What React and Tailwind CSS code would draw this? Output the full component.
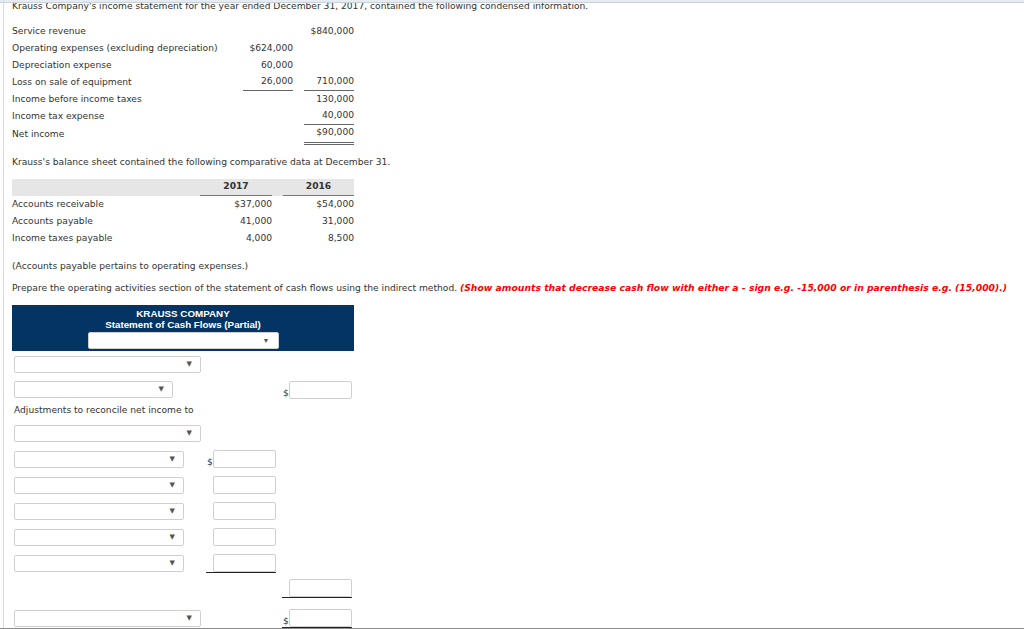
import React from "react";

const F = { fontFamily: '"DejaVu Sans", Verdana, sans-serif' };

function Sel({ w }) {
  return (
    <div
      className="h-[17px] bg-white border border-[#cfcfcf] rounded-[2px] flex items-center justify-end pr-[8px] shrink-0"
      style={{ width: w }}
    >
      <span className="text-[7px] text-[#555] leading-none">▼</span>
    </div>
  );
}

function Inp({ className = "" }) {
  return <div className={"h-[18px] bg-white border border-[#cfcfcf] rounded-[2px] flex-1 " + className} />;
}

function DollarInput({ dollar, underline }) {
  return (
    <div
      className={
        "w-[70px] flex items-end shrink-0 " +
        (underline ? "border-b border-[#222] pb-0" : "")
      }
    >
      <span className="w-[7px] text-[9.1px] leading-[12px] text-[#333] pl-[1px]">{dollar ? "$" : ""}</span>
      <Inp />
    </div>
  );
}

function IRow({ label, a, b, aLine, bLine, bDouble, extra = "" }) {
  return (
    <div className={"flex h-[17px] items-center " + extra}>
      <div className="w-[231px]">{label}</div>
      <div className={"w-[50px] h-full flex items-center justify-end " + (aLine ? "border-b border-[#666]" : "")}>{a}</div>
      <div className="w-[11px]" />
      <div
        className={
          "w-[50px] h-full flex items-center justify-end " +
          (bLine ? "border-b border-[#666] " : "") +
          (bDouble ? "border-b-[3px] border-double border-[#666] box-content" : "")
        }
      >
        {b}
      </div>
    </div>
  );
}

function BRow({ label, a, b }) {
  return (
    <div className="flex h-[17px] items-center">
      <div className="w-[188px]">{label}</div>
      <div className="w-[72px] text-right">{a}</div>
      <div className="w-[11px]" />
      <div className="w-[71px] text-right">{b}</div>
    </div>
  );
}

export default function App() {
  return (
    <div className="relative w-[1024px] h-[629px] overflow-hidden bg-white text-[#333] text-[9.15px]" style={F}>
      <div className="absolute top-0 left-0 right-0 h-[3px] bg-[#e6ecf1] border-b border-[#c9d2da] z-10" />
      <div className="absolute top-0 bottom-0 left-[3px] w-px bg-[#d5dce3] z-10" />
      <div className="absolute bottom-0 left-0 right-0 h-px bg-[#8a8a8a] z-10" />
      <div className="pl-[12px]">
        <div className="h-[12px] leading-[12px]">
          Krauss Company's income statement for the year ended December 31, 2017, contained the following condensed information.
        </div>
        <div className="mt-[11px]">
          <IRow label="Service revenue" b="$840,000" />
          <IRow label="Operating expenses (excluding depreciation)" a="$624,000" />
          <IRow label="Depreciation expense" a="60,000" />
          <IRow label="Loss on sale of equipment" a="26,000" b="710,000" aLine bLine />
          <IRow label="Income before income taxes" b="130,000" />
          <IRow label="Income tax expense" b="40,000" bLine />
          <IRow label="Net income" b="$90,000" bDouble extra="pt-[1px] h-[18px]" />
        </div>
        <div className="mt-[13px] h-[12px] leading-[12px]">
          Krauss's balance sheet contained the following comparative data at December 31.
        </div>
        <div className="mt-[11px] w-[342px]">
          <div className="flex h-[17px] bg-[#e6e6e6] font-bold">
            <div className="w-[188px]" />
            <div className="w-[72px] flex items-center justify-center border-b border-[#777]">2017</div>
            <div className="w-[11px]" />
            <div className="w-[71px] flex items-center justify-center border-b border-[#777]">2016</div>
          </div>
          <BRow label="Accounts receivable" a="$37,000" b="$54,000" />
          <BRow label="Accounts payable" a="41,000" b="31,000" />
          <BRow label="Income taxes payable" a="4,000" b="8,500" />
        </div>
        <div className="mt-[13px] h-[12px] leading-[12px]">(Accounts payable pertains to operating expenses.)</div>
        <div className="mt-[10px] h-[12px] leading-[12px] whitespace-nowrap">
          Prepare the operating activities section of the statement of cash flows using the indirect method.{" "}
          <span className="text-[#f00] font-bold italic text-[9.25px]">
            (Show amounts that decrease cash flow with either a - sign e.g. -15,000 or in parenthesis e.g. (15,000).)
          </span>
        </div>
        <div
          className="mt-[11px] w-[342px] h-[46px] bg-[#043464] text-white font-bold text-[9.8px] flex flex-col items-center pt-[3px]"
          style={{ fontFamily: '"Liberation Sans", Arial, sans-serif' }}
        >
          <div className="h-[11px] leading-[11px]">KRAUSS COMPANY</div>
          <div className="h-[11px] leading-[11px]">Statement of Cash Flows (Partial)</div>
          <div className="mt-[2px]">
            <Sel w={191} />
          </div>
        </div>
        <div className="pl-[2px]">
          <div className="h-[26px] flex items-center">
            <Sel w={187} />
          </div>
          <div className="h-[25px] flex items-center">
            <Sel w={159} />
            <div className="ml-[109px]"><DollarInput dollar /></div>
          </div>
          <div className="h-[18px] flex items-center">Adjustments to reconcile net income to</div>
          <div className="h-[26px] flex items-center">
            <Sel w={187} />
          </div>
          <div className="h-[26px] flex items-center">
            <Sel w={170} />
            <div className="ml-[22px]"><DollarInput dollar /></div>
          </div>
          <div className="h-[26px] flex items-center">
            <Sel w={170} />
            <div className="ml-[22px]"><DollarInput /></div>
          </div>
          <div className="h-[26px] flex items-center">
            <Sel w={170} />
            <div className="ml-[22px]"><DollarInput /></div>
          </div>
          <div className="h-[26px] flex items-center">
            <Sel w={170} />
            <div className="ml-[22px]"><DollarInput /></div>
          </div>
          <div className="h-[26px] flex items-center">
            <Sel w={170} />
            <div className="ml-[22px]"><DollarInput underline /></div>
          </div>
          <div className="h-[24px] flex items-center">
            <div className="ml-[268px]"><DollarInput underline /></div>
          </div>
          <div className="h-[37px] flex items-center">
            <Sel w={187} />
            <div className="ml-[81px]"><DollarInput dollar underline /></div>
          </div>
        </div>
      </div>
    </div>
  );
}
